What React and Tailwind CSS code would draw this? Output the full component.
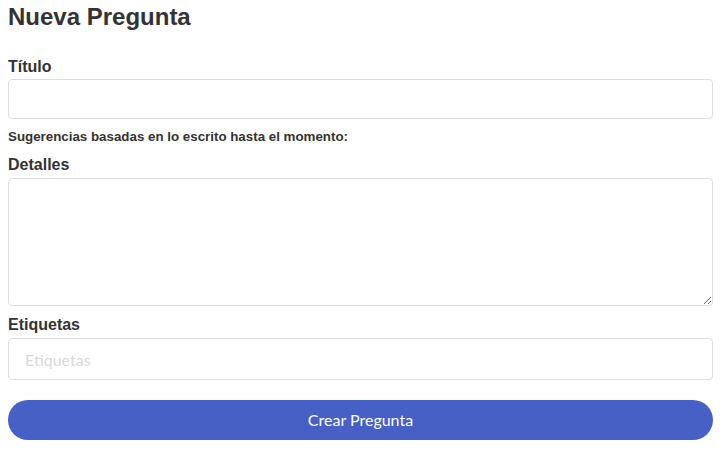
export default function App() {
  return (
    <div className="bg-white w-[724px] h-[455px] px-2 text-[#333] overflow-hidden" style={{ fontFamily: '"Liberation Sans", Arial, sans-serif' }}>
      <h1 className="text-[24px] font-bold leading-[28px] pt-[3px] mb-[27px]">Nueva Pregunta</h1>
      <label className="block text-[16px] font-bold leading-[18px] mb-[3px]">Título</label>
      <input className="block w-[705px] h-[40px] border border-[#ddd] rounded-[4px] outline-none" />
      <p className="text-[13.33px] font-bold leading-[15px] mt-[10px] mb-[12px]">Sugerencias basadas en lo escrito hasta el momento:</p>
      <label className="block text-[16px] font-bold leading-[18px] mb-[4px]">Detalles</label>
      <textarea className="block w-[705px] h-[128px] border border-[#ddd] rounded-[4px] outline-none resize-y" />
      <label className="block text-[16px] font-bold leading-[18px] mt-[10px] mb-[4px]">Etiquetas</label>
      <input
        placeholder="Etiquetas"
        className="block w-[705px] h-[42px] border border-[#ddd] rounded-[4px] outline-none px-[16px] text-[16px] placeholder:text-[#d8d8d8]"
        style={{ fontFamily: 'Lato, "Open Sans", sans-serif' }}
      />
      <button
        className="block mt-[20px] w-[705px] h-[40px] rounded-full bg-[#4760c6] text-white text-[16px]"
        style={{ fontFamily: 'Lato, "Open Sans", sans-serif' }}
      >
        Crear Pregunta
      </button>
    </div>
  );
}
